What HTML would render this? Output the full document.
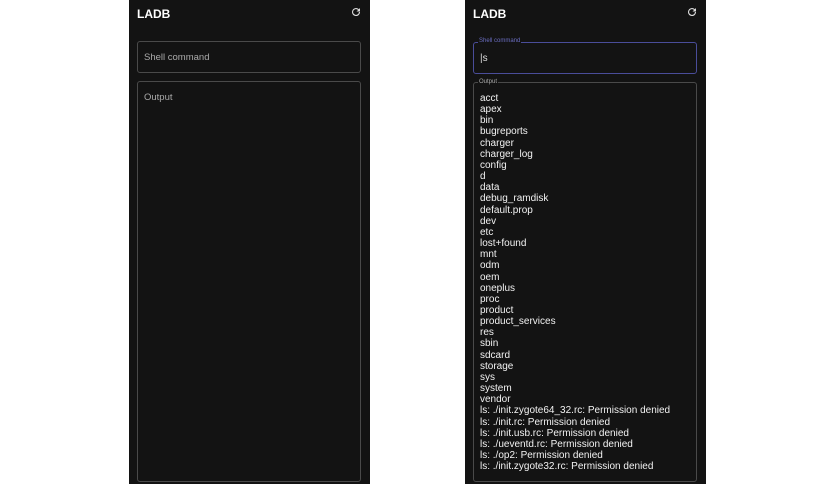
<!DOCTYPE html>
<html><head><style>
body{margin:0;width:836px;height:484px;background:#fff;position:relative;overflow:hidden;font-family:"Liberation Sans",sans-serif}
.ph{position:absolute;top:0;width:241px;height:484px;background:#131313}
.t{position:absolute;left:8px;top:7px;color:#fff;font-weight:bold;font-size:12px}
.r{position:absolute;right:8px;top:6px}
.box{position:absolute;left:8px;width:222px;border:1px solid #4a4a4a;border-radius:3px}
.lbl{color:#aaa;font-size:9.5px}
pre{margin:0;font-family:"Liberation Sans",sans-serif;color:#f2f2f2;font-size:10px;line-height:11.15px}
</style></head><body>
<div class="ph" style="left:129px">
<div class="t">LADB</div>
<svg class="r" width="12" height="12" viewBox="0 0 24 24"><path d="M17.6 6.4A8 8 0 1 0 20 12h-2.2a5.8 5.8 0 1 1-1.7-4.1L13 11h7V4z" fill="#ddd"/></svg>
<div class="box" style="top:41px;height:30px"><span class="lbl" style="position:absolute;left:6px;top:10px">Shell command</span></div>
<div class="box" style="top:81px;height:399px"><span class="lbl" style="position:absolute;left:6px;top:10px">Output</span></div>
</div>
<div class="ph" style="left:465px">
<div class="t">LADB</div>
<svg class="r" width="12" height="12" viewBox="0 0 24 24"><path d="M17.6 6.4A8 8 0 1 0 20 12h-2.2a5.8 5.8 0 1 1-1.7-4.1L13 11h7V4z" fill="#ddd"/></svg>
<div class="box" style="top:42px;height:30px;border-color:#4a4d9a"><span style="position:absolute;left:4px;top:-5px;font-size:6px;color:#6a6dc0;background:#131313;padding:0 1px">Shell command</span><span style="position:absolute;left:6px;top:10px;color:#ddd;font-size:10px">|s</span></div>
<div class="box" style="top:82px;height:398px"><span style="position:absolute;left:4px;top:-4px;font-size:6px;color:#aaa;background:#131313;padding:0 1px">Output</span>
<pre style="position:absolute;left:6px;top:10px">acct
apex
bin
bugreports
charger
charger_log
config
d
data
debug_ramdisk
default.prop
dev
etc
lost+found
mnt
odm
oem
oneplus
proc
product
product_services
res
sbin
sdcard
storage
sys
system
vendor
ls: ./init.zygote64_32.rc: Permission denied
ls: ./init.rc: Permission denied
ls: ./init.usb.rc: Permission denied
ls: ./ueventd.rc: Permission denied
ls: ./op2: Permission denied
ls: ./init.zygote32.rc: Permission denied</pre></div>
</div>
</body></html>
